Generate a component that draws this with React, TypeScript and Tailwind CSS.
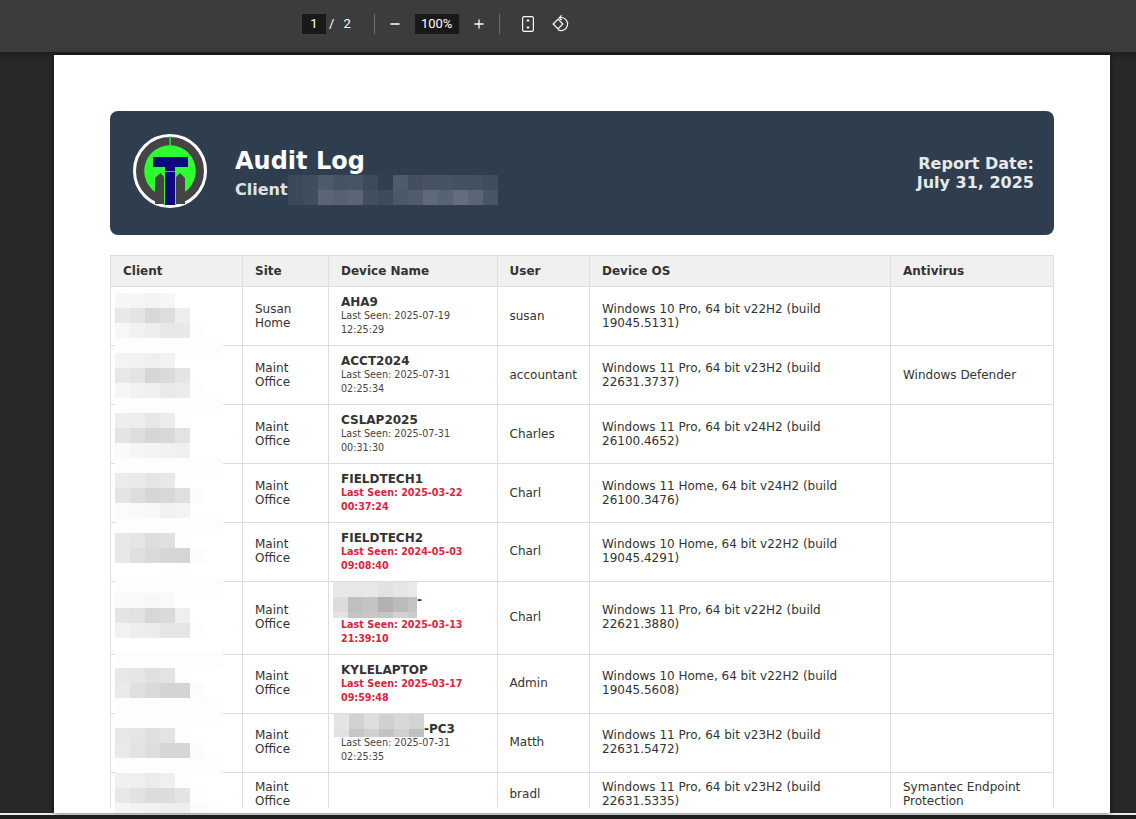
import { Minus, Plus } from "lucide-react";

type Row = {
	site: string[];
	name?: string;
	seen?: string[];
	stale?: boolean;
	user: string;
	os: string;
	av?: string;
	mask?: "wide" | "pc3";
};

const rows: Row[] = [
	{ site: ["Susan", "Home"], name: "AHA9", seen: ["Last Seen: 2025-07-19", "12:25:29"], user: "susan", os: "Windows 10 Pro, 64 bit v22H2 (build 19045.5131)" },
	{ site: ["Maint", "Office"], name: "ACCT2024", seen: ["Last Seen: 2025-07-31", "02:25:34"], user: "accountant", os: "Windows 11 Pro, 64 bit v23H2 (build 22631.3737)", av: "Windows Defender" },
	{ site: ["Maint", "Office"], name: "CSLAP2025", seen: ["Last Seen: 2025-07-31", "00:31:30"], user: "Charles", os: "Windows 11 Pro, 64 bit v24H2 (build 26100.4652)" },
	{ site: ["Maint", "Office"], name: "FIELDTECH1", seen: ["Last Seen: 2025-03-22", "00:37:24"], stale: true, user: "Charl", os: "Windows 11 Home, 64 bit v24H2 (build 26100.3476)" },
	{ site: ["Maint", "Office"], name: "FIELDTECH2", seen: ["Last Seen: 2024-05-03", "09:08:40"], stale: true, user: "Charl", os: "Windows 10 Home, 64 bit v22H2 (build 19045.4291)" },
	{ site: ["Maint", "Office"], mask: "wide", seen: ["Last Seen: 2025-03-13", "21:39:10"], stale: true, user: "Charl", os: "Windows 11 Pro, 64 bit v22H2 (build 22621.3880)" },
	{ site: ["Maint", "Office"], name: "KYLELAPTOP", seen: ["Last Seen: 2025-03-17", "09:59:48"], stale: true, user: "Admin", os: "Windows 10 Home, 64 bit v22H2 (build 19045.5608)" },
	{ site: ["Maint", "Office"], mask: "pc3", seen: ["Last Seen: 2025-07-31", "02:25:35"], user: "Matth", os: "Windows 11 Pro, 64 bit v23H2 (build 22631.5472)" },
	{ site: ["Maint", "Office"], user: "bradl", os: "Windows 11 Pro, 64 bit v23H2 (build 22631.5335)", av: "Symantec Endpoint Protection" },
];

// redacted blocks from the screenshot, one array per pixelated row
const S = ["fd", "fd", "fd", "fd", "fd", "fd", "fd", "fd"];
const clientMask = [
	["f6", "f5", "f4", "f6"],
	["e8", "e4", "d8", "dd", "ee"],
	["f7", "f1", "ee", "e8", "e8", "fd"],
	S,
	["f3", "f2", "ef", "f2"],
	["e8", "e4", "d6", "da", "e4"],
	["f6", "f2", "f0", "ea", "ec", "fd"],
	S,
	["ee", "ed", "e7", "ec", "fd"],
	["e4", "dd", "d6", "d8", "e3"],
	["fa", "f5", "f4", "f1", "f0"],
	S,
	["ec", "ea", "e5", "e8", "fd"],
	["e4", "dd", "d6", "d8", "df", "fc"],
	["fb", "f9", "f8", "f2", "f3"],
	S,
	["e8", "e5", "dd", "e0", "fd"],
	["e8", "df", "da", "d6", "d5", "fc"],
	["ff", "ff", "ff", "fe", "fe"],
	S,
	["fa", "f9", "f8", "f9"],
	["e4", "e2", "d7", "da", "ef"],
	["f2", "ee", "ec", "e5", "e5", "fd"],
	[],
	S,
	["e8", "e6", "e0", "e3", "fd"],
	["ea", "e0", "da", "d4", "d4", "fc"],
	S,
	["fe", "fe", "fe", "fe", "fe", "fe", "fe", "fe"],
	["e7", "e5", "e0", "e3", "fd"],
	["ea", "e3", "dd", "d6", "d6", "fc"],
	S,
	["f0", "ef", "eb", "ef", "fd"],
	["e8", "e2", "dc", "dc", "e4", "fe"],
	["f5", "f3", "f2", "ee", "ee", "fc", "fd"],
];

const clientNameMask = [
	["3b4a5b", "3f4d5e", "4d5a6a", "455364", "465465", "3c4a5b", "313f51", "4d5b6b", "434f60", "465364", "465364", "435162", "425060", "3e4c5d"],
	["3b4a5b", "3f4d5e", "5a6676", "566272", "5a6676", "424f60", "3d4b5c", "4b5868", "4f5c6c", "5e6a7a", "566373", "626e7d", "5a6676", "475565"],
];

const wideMask = [
	["e8e8e8", "e7e7e7", "e8e8e8", "e2e2e2", "e6e6e6", "e9e9e9"],
	["dcdcdc", "bfbfbf", "c4c4c4", "b3b1b1", "bcbbbb", "c0c4c6"],
	["e6e2df", "c4c4c4", "c8c8c8", "c6c6c6", "d2d2d2", "c8cccf"],
];

const pc3Mask = [
	["e4e4e4", "d2d2d2", "dddddd", "d0d0d0", "d8d8d8", "d2d3d5"],
	["e2e2e2", "c6c6c6", "d0d0d2", "c2c2c2", "cfd0d1", "bfc0c2"],
];

function Blocks({ data, rowH = [] }: { data: string[][]; rowH?: number[] }) {
	return (
		<div className="flex flex-col">
			{data.map((row, i) => (
				<div key={i} className="flex h-[15px]" style={rowH[i] ? { height: rowH[i] } : undefined}>
					{row.map((c, j) => (
						<div
							key={j}
							className="h-full w-[15px] shrink-0"
							style={{ background: c.length === 2 ? `#${c}${c}${c}` : `#${c}` }}
						/>
					))}
				</div>
			))}
		</div>
	);
}

function Logo() {
	return (
		<svg viewBox="133 134 74 74" className="mb-[4px] h-[74px] w-[74px]">
			<circle cx="170" cy="171" r="35.5" fill="#444444" stroke="#ffffff" strokeWidth="3" />
			<circle cx="170" cy="171" r="25.8" fill="#2eff2e" />
			<rect x="169.5" y="136" width="1.2" height="11" fill="#2eff2e" />
			<path d="M155 204V178l5.5-5 3.5 4v27zM176 204v-27l4-4 5 5v26z" fill="#444444" />
			<rect x="164" y="171" width="12" height="34" fill="#2eff2e" />
			<rect x="165" y="172" width="10" height="33" fill="#0d0880" />
			<rect x="153" y="157" width="35" height="10" fill="#0d0880" />
			<rect x="165" y="167" width="10" height="4.2" fill="#0d0880" />
		</svg>
	);
}

function Toolbar() {
	return (
		<div className="flex h-[52px] shrink-0 items-center bg-[#3c3c3c] pb-[4px] pl-[302px] font-['Roboto',sans-serif] text-[13px] text-white">
			<div className="flex h-[20px] w-[24px] items-center justify-center bg-[#191919]">1</div>
			<span className="ml-[3px]">/</span>
			<span className="ml-[9px]">2</span>
			<div className="ml-[23px] h-[20px] w-px bg-[#6f6f6f]" />
			<Minus size={14} strokeWidth={2.2} className="ml-[13px]" />
			<div className="ml-[13px] flex h-[20px] w-[44px] items-center justify-center bg-[#191919]">100%</div>
			<Plus size={14} strokeWidth={2.2} className="ml-[13px]" />
			<div className="ml-[13px] h-[20px] w-px bg-[#6f6f6f]" />
			<svg viewBox="0 0 20 20" className="ml-[18px] h-[20px] w-[20px]" fill="none" stroke="#ffffff" strokeWidth="1.2">
				<rect x="4.6" y="2.6" width="10.8" height="14.8" rx="1.6" />
				<path d="M8.7 7.4 10 6l1.3 1.4M8.7 12.6 10 14l1.3-1.4" />
			</svg>
			<svg viewBox="0 0 20 20" className="ml-[13px] h-[20px] w-[20px]" fill="none" stroke="#ffffff" strokeWidth="1.2">
				<path d="M7 5.2 2.2 10 7 14.8 11.8 10z" />
				<path d="M8.3 3.8c.6-.2 1.2-.3 1.9-.3a6.5 6.5 0 1 1-3.2 12.2" />
				<path d="M10.6 1.4 8.2 3.8l2.4 2.2" />
			</svg>
		</div>
	);
}

function DeviceName({ row }: { row: Row }) {
	if (row.mask === "wide") {
		return (
			<div className="-mt-[8px] ml-[-8px] flex h-[36px] items-center font-bold">
				<div className="w-[84px] overflow-hidden">
					<Blocks data={wideMask} rowH={[15, 15, 6]} />
				</div>
				<span>-</span>
			</div>
		);
	}
	if (row.mask === "pc3") {
		return (
			<div className="flex h-[14px] font-bold">
				<div className="-mt-[8px] ml-[-7px] h-[23px] w-[90px] shrink-0 overflow-hidden">
					<Blocks data={pc3Mask} rowH={[15, 8]} />
				</div>
				<span>-PC3</span>
			</div>
		);
	}
	if (!row.name) return null;
	return <div className="font-bold">{row.name}</div>;
}

const cell = "border-b border-r border-[#dddddd] px-[12px] py-[8px]";
// the lower rows sit a pixel higher in the source pdf
const lowCell = "border-b border-r border-[#dddddd] px-[12px] pb-[9px] pt-[7px]";
const headCell = "h-[32px] border-b border-r border-t border-[#dddddd] px-[12px] text-left font-bold";

export default function App() {
	return (
		<div className="flex h-[819px] w-[1136px] flex-col overflow-hidden bg-[#282828] font-['DejaVu_Sans',sans-serif]">
			<Toolbar />
			<div className="h-[761px] shrink-0 bg-gradient-to-b from-[#1f1f1f] to-[#282828] to-[8px] pl-[54px] pt-[3px]">
				<div className="relative h-[758px] w-[1056px] overflow-hidden bg-white px-[56px] pt-[56px] shadow-[0_0_6px_rgba(0,0,0,0.6)]">
					<div className="flex h-[124px] items-center justify-between rounded-lg bg-[#2f3e4f] pl-[23px] pr-[20px]">
						<div className="flex items-center">
							<Logo />
							<div className="ml-[28px]">
								<div className="mb-[5px] text-[24px] font-bold leading-[28px] text-white">Audit Log</div>
								<div className="flex h-[19px] items-center text-[16px] font-bold leading-[19px] text-[#dfe3e6]">
									Client
									<Blocks data={clientNameMask} />
								</div>
							</div>
						</div>
						<div className="text-right text-[16px] font-bold leading-[19px] text-[#e6e9ec]">
							<div>Report Date:</div>
							<div>July 31, 2025</div>
						</div>
					</div>

					<div className="mt-[20px] h-[553px] overflow-hidden">
						<table className="w-[944px] table-fixed border-separate border-spacing-0 text-[12px] leading-[14px] text-[#333333]">
							<colgroup>
								<col className="w-[133px]" />
								<col className="w-[86px]" />
								<col className="w-[169px]" />
								<col className="w-[92px]" />
								<col className="w-[301px]" />
								<col className="w-[163px]" />
							</colgroup>
							<thead>
								<tr className="bg-[#f0f0f0]">
									<th className={`${headCell} border-l`}>Client</th>
									<th className={headCell}>Site</th>
									<th className={headCell}>Device Name</th>
									<th className={`${headCell} pl-[11.5px]`}>User</th>
									<th className={headCell}>Device OS</th>
									<th className={headCell}>Antivirus</th>
								</tr>
							</thead>
							<tbody>
								{rows.map((row, i) => {
									const textCell = i >= 4 ? lowCell : cell;
									return (
										<tr key={i}>
											<td className={`${cell} border-l`} />
											<td className={textCell}>
												{row.site.map((s) => (
													<div key={s}>{s}</div>
												))}
											</td>
											<td className={cell}>
												<DeviceName row={row} />
												{row.seen && (
													<div className={row.stale ? "text-[9.6px] font-bold text-[#dc2440]" : "text-[9.6px] text-[#444444]"}>
														{row.seen.map((s) => (
															<div key={s}>{s}</div>
														))}
													</div>
												)}
											</td>
											<td className={`${textCell} pl-[11.5px]`}>{row.user}</td>
											<td className={textCell}>{row.os}</td>
											<td className={textCell}>{row.av}</td>
										</tr>
									);
								})}
							</tbody>
						</table>
					</div>

					{/* pixelated client column, runs straight across the row lines */}
					<div className="absolute left-[61px] top-[238px] w-[108px] overflow-hidden bg-white">
						<Blocks data={clientMask} />
					</div>
				</div>
			</div>
			<div className="h-[2px] shrink-0 bg-[#eeeeee]" />
			<div className="flex-1 bg-[#1f1f1f]" />
		</div>
	);
}
